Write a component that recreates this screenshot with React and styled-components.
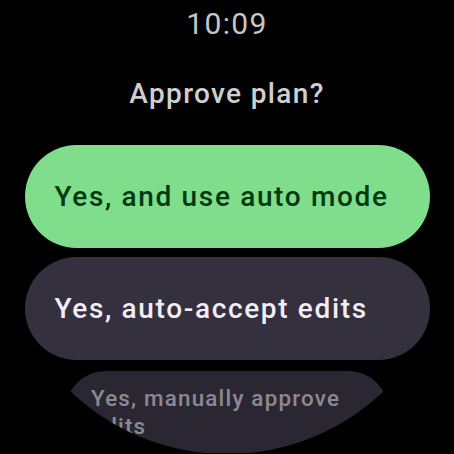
import React from 'react';
import styled, { createGlobalStyle } from 'styled-components';

const GlobalStyle = createGlobalStyle`
  html, body {
    margin: 0;
    padding: 0;
    background: #000;
  }
  body {
    font-family: Roboto, "Noto Sans", sans-serif;
  }
`;

const Screen = styled.div`
  width: 454px;
  height: 454px;
  border-radius: 50%;
  overflow: hidden;
  background: #000;
  display: flex;
  flex-direction: column;
  align-items: center;
  padding-top: 9px;
  box-sizing: border-box;
`;

const Time = styled.div`
  font-size: 30px;
  line-height: 30px;
  font-weight: 400;
  letter-spacing: 1.4px;
  color: #c6c6c6;
`;

const Title = styled.div`
  margin-top: 41px;
  font-size: 28px;
  line-height: 28px;
  font-weight: 500;
  letter-spacing: 1.35px;
  color: #cfcfcf;
`;

const Options = styled.div`
  margin-top: 37px;
  display: flex;
  flex-direction: column;
  align-items: center;
  gap: 9px;
`;

const Chip = styled.button`
  box-sizing: border-box;
  display: flex;
  align-items: center;
  text-align: left;
  border: none;
  margin: 0;
  font-family: inherit;
  font-weight: 500;
  width: ${p => (p.$small ? '324px' : '405px')};
  height: ${p => (p.$small ? '82px' : '103px')};
  border-radius: ${p => (p.$small ? '41px' : '52px')};
  padding: ${p => (p.$small ? '0 24px 0 26px' : '0 30px')};
  font-size: ${p => (p.$small ? '22.4px' : '28px')};
  line-height: ${p => (p.$small ? '28px' : '35px')};
  letter-spacing: ${p => (p.$small ? '1.2px' : '1.65px')};
  margin-top: ${p => (p.$small ? '2px' : '0')};
  background: ${p => p.$bg};
  color: ${p => p.$fg};
  cursor: pointer;
`;

const options = [
  { label: 'Yes, and use auto mode', bg: '#7fdd8c', fg: '#003a10' },
  { label: 'Yes, auto-accept edits', bg: '#34303e', fg: '#f2ecf7' },
  { label: 'Yes, manually approve edits', bg: '#2a2732', fg: '#8d8994', small: true },
];

export default function App() {
  return (
    <>
      <GlobalStyle />
      <Screen>
        <Time>10:09</Time>
        <Title>Approve plan?</Title>
        <Options>
          {options.map(o => (
            <Chip key={o.label} $bg={o.bg} $fg={o.fg} $small={o.small}>
              {o.label}
            </Chip>
          ))}
        </Options>
      </Screen>
    </>
  );
}
